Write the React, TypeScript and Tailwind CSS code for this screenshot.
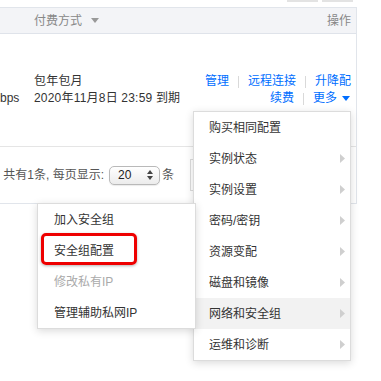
import React from "react";

const font = "font-['Liberation_Sans','Noto_Sans_CJK_SC',sans-serif]";

function Caret({ className }: { className?: string }) {
  return (
    <svg width="8" height="5" viewBox="0 0 8 5" className={className}>
      <path d="M0 0 L8 0 L4 5 Z" fill="currentColor" />
    </svg>
  );
}

function RightArrow() {
  return (
    <svg width="5" height="9" viewBox="0 0 5 9">
      <path d="M0 0 L5 4.5 L0 9 Z" fill="#cfcfcf" />
    </svg>
  );
}

function Sep() {
  return <span className="w-px h-[12px] bg-[#d9d9d9] mx-[9px]" />;
}

const menuItems = [
  { label: "购买相同配置", sub: false },
  { label: "实例状态", sub: true },
  { label: "实例设置", sub: true },
  { label: "密码/密钥", sub: true },
  { label: "资源变配", sub: true },
  { label: "磁盘和镜像", sub: true },
  { label: "网络和安全组", sub: true, active: true },
  { label: "运维和诊断", sub: true },
];

const subItems = [
  { label: "加入安全组" },
  { label: "安全组配置" },
  { label: "修改私有IP", disabled: true },
  { label: "管理辅助私网IP" },
];

export default function App() {
  return (
    <div className={`relative w-[381px] h-[381px] overflow-hidden bg-white text-[12px] text-[#333] ${font}`}>
      {/* buttons cut off at the top */}
      <div className="flex justify-end gap-[4px] pr-[28px] h-[7px]">
        <div className="w-[31px] h-[2px] bg-[#e3e3e3]" />
        <div className="w-[31px] h-[2px] bg-[#e3e3e3]" />
      </div>

      {/* table */}
      <div className="w-[357px] border-t border-r border-b border-[#e1e5eb]">
        <div className="h-[26px] flex items-center justify-between bg-[#f3f4f7] border-b border-[#dfe3ea] text-[#888] pl-[34px] pr-[5px]">
          <span className="flex items-center gap-[9px]">
            付费方式
            <Caret className="text-[#999]" />
          </span>
          <span>操作</span>
        </div>

        <div className="h-[113px] flex items-center border-b border-[#e5e5e5] leading-[17px]">
          <div className="w-[20px] whitespace-nowrap pt-[17px]">bps</div>
          <div className="ml-[14px] whitespace-nowrap tracking-[0.2px]">
            <div>包年包月</div>
            <div>2020年11月8日 23:59 到期</div>
          </div>
          <div className="flex-1 flex flex-col items-end pr-[5px] text-[#006eff]">
            <div className="flex items-center">
              <span>管理</span>
              <Sep />
              <span>远程连接</span>
              <Sep />
              <span>升降配</span>
            </div>
            <div className="flex items-center pr-px">
              <span>续费</span>
              <Sep />
              <span>更多</span>
              <Caret className="ml-[5px]" />
            </div>
          </div>
        </div>

        <div className="h-[56px] flex items-center">
          <div className="w-[104px] flex justify-end whitespace-nowrap text-[#555]">共有1条, 每页显示:</div>
          <div className="ml-[5px] w-[51px] h-[19px] rounded-[5px] border border-[#b9b9b9] bg-gradient-to-b from-white to-[#ececec] shadow-[0_1px_1px_rgba(0,0,0,0.08)] flex items-center justify-between pl-[8px] pr-[6px] text-[#222]">
            <span>20</span>
            <svg width="6" height="10" viewBox="0 0 6 10">
              <path d="M3 0 L6 4 L0 4 Z M0 6 L6 6 L3 10 Z" fill="#444" />
            </svg>
          </div>
          <span className="ml-[2px] text-[#555]">条</span>
          <div className="ml-[16px] w-[30px] h-[32px] border border-[#dcdcdc]" />
        </div>
      </div>

      {/* more menu */}
      <div className="absolute left-[193px] top-[111px] w-[158px] bg-white border border-[#dcdcdc] shadow-[0_2px_8px_rgba(0,0,0,0.15)]">
        {menuItems.map((item) => (
          <div
            key={item.label}
            className={`h-[31px] flex items-center justify-between pl-[15px] pr-[5px] ${item.active ? "bg-[#f2f2f2]" : ""}`}
          >
            <span>{item.label}</span>
            {item.sub && <RightArrow />}
          </div>
        ))}
      </div>

      {/* security group submenu */}
      <div className="absolute left-[37px] top-[203px] w-[159px] bg-white border border-[#dcdcdc] shadow-[0_2px_8px_rgba(0,0,0,0.15)]">
        {subItems.map((item) => (
          <div
            key={item.label}
            className={`h-[31px] flex items-center pl-[16px] ${item.disabled ? "text-[#aaa]" : ""}`}
          >
            {item.label}
          </div>
        ))}
        <div className="absolute left-[3px] top-[29px] w-[96px] h-[32px] border-[3px] border-[#ee0000] rounded-[5px] shadow-[0_1px_3px_rgba(0,0,0,0.3)]" />
      </div>
    </div>
  );
}
